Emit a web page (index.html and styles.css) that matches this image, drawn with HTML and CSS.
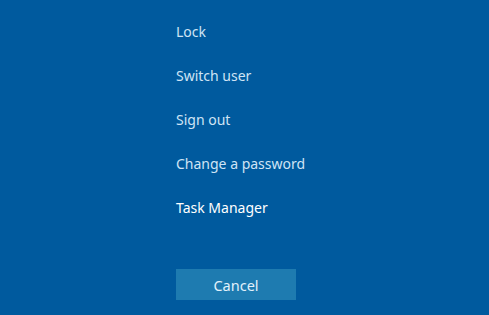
FILE: index.html
```html
<!DOCTYPE html>
<html lang="en">
<head>
    <meta charset="UTF-8">
    <title>Security options</title>
    <link rel="stylesheet" href="styles.css">
</head>
<body>
    <div class="options">
        <ul class="menu">
            <li class="item">Lock</li>
            <li class="item">Switch user</li>
            <li class="item">Sign out</li>
            <li class="item">Change a password</li>
            <li class="item active">Task Manager</li>
        </ul>
        <button class="cancel">Cancel</button>
    </div>
</body>
</html>
```

FILE: styles.css
```css
html, body { margin: 0; height: 100%; }
body { background: #005a9e; font-family: "Noto Sans", "Open Sans", sans-serif; color: #cfe4f5; overflow: hidden; }
.options { padding: 21px 0 0 176px; }
.menu { list-style: none; margin: 0; padding: 0; }
.item { height: 44px; line-height: 22px; font-size: 14px; }
.item.active { color: #ffffff; }
.cancel {
    margin-top: 28px;
    width: 120px;
    height: 31px;
    border: none;
    background: #1e7bb0;
    color: #e2f1fb;
    font-family: inherit;
    font-size: 14.5px;
    padding: 0;
}
```
